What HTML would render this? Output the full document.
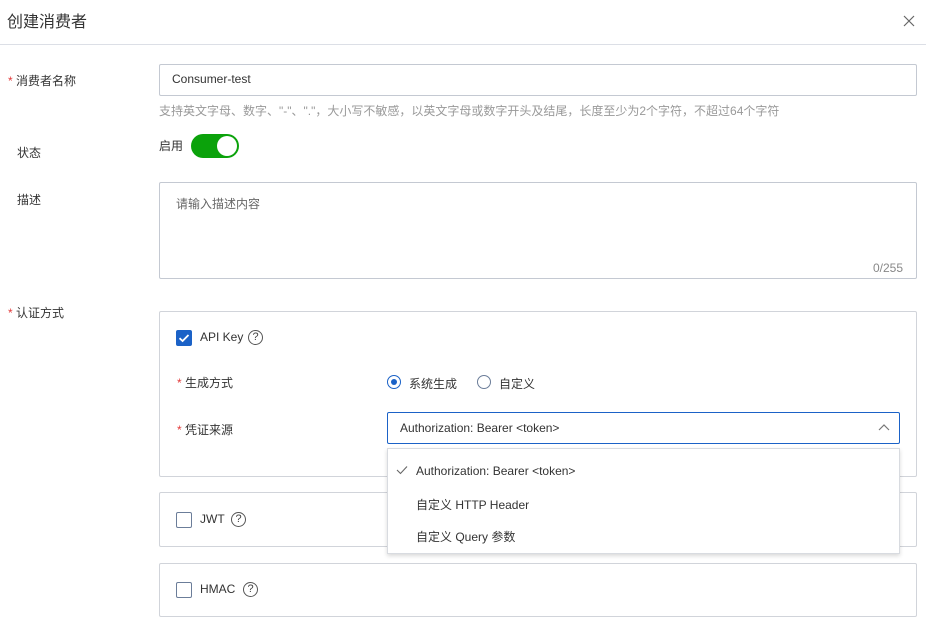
<!DOCTYPE html>
<html><head><meta charset="utf-8"><style>
*{margin:0;padding:0;box-sizing:border-box}
body{width:926px;height:624px;background:#fff;font-family:"Liberation Sans","Noto Sans CJK SC",sans-serif;font-size:12px;color:#333;position:relative;overflow:hidden}
.a{position:absolute;white-space:nowrap}
.star{color:#e23b3b}
.box{position:absolute;border:1px solid #d1d4da;border-radius:2px}
.cb{position:absolute;width:16px;height:16px;border:1px solid #6b7d99;border-radius:2px;background:#fff}
.q{position:absolute;width:15px;height:15px;border:1.3px solid #555;border-radius:50%;font-size:11px;line-height:13px;text-align:center;color:#444}
</style></head><body>
<div class="a" style="left:7px;top:8px;font-size:16px;color:#333">创建消费者</div>
<svg class="a" style="left:903px;top:15px" width="12" height="12" viewBox="0 0 12 12"><path d="M1 1L11 11M11 1L1 11" stroke="#666" stroke-width="1.2"/></svg>
<div class="a" style="left:0;top:44px;width:926px;height:1px;background:#dcdfe6"></div>

<div class="a" style="left:8px;top:72px"><span class="star">*</span> 消费者名称</div>
<div class="box" style="left:159px;top:64px;width:758px;height:32px;border-color:#c4c9d2"></div>
<div class="a" style="left:172px;top:72px">Consumer-test</div>
<div class="a" style="left:159px;top:102px;color:#999">支持英文字母、数字、"-"、"."，大小写不敏感，以英文字母或数字开头及结尾，长度至少为2个字符，不超过64个字符</div>

<div class="a" style="left:17px;top:144px">状态</div>
<div class="a" style="left:159px;top:137px">启用</div>
<div class="a" style="left:191px;top:134px;width:48px;height:24px;border-radius:12px;background:#0ba20b"></div>
<div class="a" style="left:217px;top:136px;width:20px;height:20px;border-radius:50%;background:#fff"></div>

<div class="a" style="left:17px;top:191px">描述</div>
<div class="box" style="left:159px;top:182px;width:758px;height:97px;border-color:#c4c9d2"></div>
<div class="a" style="left:176px;top:195px;color:#666">请输入描述内容</div>
<div class="a" style="left:873px;top:261px;color:#888">0/255</div>

<div class="a" style="left:8px;top:304px"><span class="star">*</span> 认证方式</div>
<div class="box" style="left:159px;top:311px;width:758px;height:166px"></div>
<div class="cb" style="left:176px;top:330px;background:#1b62c7;border-color:#1b62c7"></div>
<svg class="a" style="left:176px;top:330px" width="16" height="16" viewBox="0 0 16 16"><path d="M3.5 8.2L6.6 11L12.5 5" stroke="#fff" stroke-width="1.8" fill="none"/></svg>
<div class="a" style="left:200px;top:330px">API Key</div>
<div class="q" style="left:248px;top:330px">?</div>

<div class="a" style="left:177px;top:374px"><span class="star">*</span> 生成方式</div>
<div class="a" style="left:387px;top:375px;width:14px;height:14px;border-radius:50%;border:1.3px solid #1b62c7"></div>
<div class="a" style="left:391px;top:379px;width:6px;height:6px;border-radius:50%;background:#1b62c7"></div>
<div class="a" style="left:409px;top:375px">系统生成</div>
<div class="a" style="left:477px;top:375px;width:14px;height:14px;border-radius:50%;border:1.3px solid #6b7d99"></div>
<div class="a" style="left:499px;top:375px">自定义</div>

<div class="a" style="left:177px;top:421px"><span class="star">*</span> 凭证来源</div>
<div class="box" style="left:387px;top:412px;width:513px;height:32px;border-color:#1b62c7"></div>
<div class="a" style="left:400px;top:421px">Authorization: Bearer &lt;token&gt;</div>
<svg class="a" style="left:878px;top:423px" width="12" height="8" viewBox="0 0 12 8"><path d="M1 7L6 2L11 7" stroke="#777" stroke-width="1.2" fill="none"/></svg>

<div class="box" style="left:159px;top:492px;width:758px;height:55px"></div>
<div class="cb" style="left:176px;top:512px"></div>
<div class="a" style="left:200px;top:512px">JWT</div>
<div class="q" style="left:231px;top:512px">?</div>

<div class="box" style="left:159px;top:563px;width:758px;height:54px"></div>
<div class="cb" style="left:176px;top:582px"></div>
<div class="a" style="left:200px;top:582px">HMAC</div>
<div class="q" style="left:243px;top:582px">?</div>

<div class="a" style="left:387px;top:448px;width:513px;height:106px;background:#fff;border:1px solid #d8dbe0;box-shadow:0 2px 4px rgba(0,0,0,.15)"></div>
<svg class="a" style="left:396px;top:465px" width="12" height="10" viewBox="0 0 12 10"><path d="M1 5L4.5 8.5L11 1.5" stroke="#666" stroke-width="1.1" fill="none"/></svg>
<div class="a" style="left:416px;top:464px">Authorization: Bearer &lt;token&gt;</div>
<div class="a" style="left:416px;top:496px">自定义 HTTP Header</div>
<div class="a" style="left:416px;top:528px">自定义 Query 参数</div>
</body></html>
